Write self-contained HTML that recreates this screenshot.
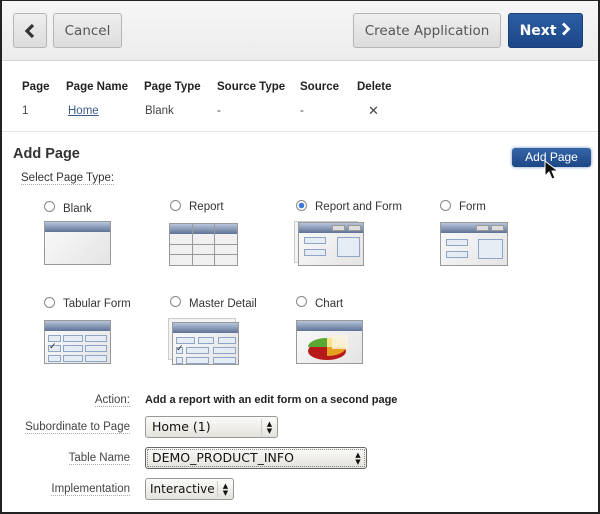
<!DOCTYPE html>
<html><head><meta charset="utf-8"><style>
*{margin:0;padding:0;box-sizing:border-box}
body{width:600px;height:514px;overflow:hidden;background:#fff;font-family:"Liberation Sans",sans-serif;position:relative;color:#333}
.a{position:absolute}
.frame{position:absolute;left:0;top:0;width:600px;height:514px;border-top:1px solid #222;border-left:2px solid #222;border-right:2px solid #222;border-bottom:2px solid #222;pointer-events:none}
.hdr{left:0;top:0;width:600px;height:61px;background:linear-gradient(#f6f6f6,#ececec);border-bottom:1px solid #d4d4d4}
.btn{position:absolute;border:1px solid #b5b5b5;border-radius:3px;background:linear-gradient(#efefef,#dcdcdc);color:#555;font-family:"DejaVu Sans",sans-serif;font-size:13.5px;text-align:center;line-height:34px;height:35px;top:13px}
.th{font-size:11.5px;font-weight:bold;color:#222;top:81px}
.td{font-size:11.5px;color:#444;top:105px}
.rad{width:11px;height:11px;border:1px solid #888;border-radius:50%;background:#fff}
.lbl{font-size:11.5px;color:#333}
.ic{position:absolute;border:1px solid #999;background:linear-gradient(135deg,#fafafa,#e4e4e4)}
.ic .bar{position:absolute;left:0;right:0;top:0;height:10px;background:linear-gradient(#b9c6da,#5e7296)}
.fld{position:absolute;border:1px solid #8ea5c5;background:#e6ecf4;height:7px}
.sel{position:absolute;height:22px;border:1px solid #999;border-radius:3px;background:linear-gradient(#fbfbf8,#e4e2dc);font-family:"DejaVu Sans",sans-serif;font-size:12.5px;color:#111;line-height:20px;padding-left:6px}
.sel .ar{position:absolute;right:0;top:2px;bottom:2px;width:16px;border-left:1px solid #ccc;font-size:7px;line-height:7px;text-align:center;padding-top:2px}
.fl{font-size:11.5px;color:#444;text-align:right;width:130px;left:0}
.fl span{border-bottom:1px dotted #aaa}
</style></head><body>
<div class="a hdr"></div>
<div class="btn" style="left:13px;width:34px">
<svg width="12" height="16" viewBox="0 0 12 16" style="margin-top:9px"><path d="M9 2 L3 8 L9 14" stroke="#333" stroke-width="3.2" fill="none"/></svg></div>
<div class="btn" style="left:53px;width:69px">Cancel</div>
<div class="btn" style="left:353px;width:148px">Create Application</div>
<div class="btn" style="left:508px;width:75px;background:linear-gradient(#2c5ea3,#1c4687);border-color:#1a3f78;color:#fff;font-weight:bold;font-size:14px">Next <svg width="10" height="14" viewBox="0 0 10 14" style="vertical-align:-1px"><path d="M2 1.5 L7.5 7 L2 12.5" stroke="#fff" stroke-width="2.8" fill="none"/></svg></div>

<div class="a th" style="left:22px">Page</div>
<div class="a th" style="left:66px">Page Name</div>
<div class="a th" style="left:144px">Page Type</div>
<div class="a th" style="left:217px">Source Type</div>
<div class="a th" style="left:300px">Source</div>
<div class="a th" style="left:357px">Delete</div>
<div class="a td" style="left:22px">1</div>
<div class="a td" style="left:68px;color:#3b5a8a;text-decoration:underline">Home</div>
<div class="a td" style="left:145px">Blank</div>
<div class="a td" style="left:217px">-</div>
<div class="a td" style="left:300px">-</div>
<div class="a td" style="left:368px;font-size:13px;top:103px">✕</div>
<div class="a" style="left:2px;top:131px;width:596px;height:1px;background:#e6e6e6"></div>

<div class="a" style="left:13px;top:146px;font-size:14.5px;font-weight:bold;color:#333">Add Page</div>
<div class="a" style="left:512px;top:148px;width:79px;height:19px;border-radius:3px;background:linear-gradient(#3566a8,#1d4685);color:#fff;font-size:12px;text-align:center;line-height:19px;box-shadow:0 0 3px #6f8fc0">Add Page</div>
<svg class="a" style="left:543px;top:160px" width="18" height="22" viewBox="0 0 18 22"><path d="M2 1 L2 16 L6 12 L9 19 L12 18 L9 11 L15 11 Z" fill="#111" stroke="#fff" stroke-width="1"/></svg>
<div class="a lbl" style="left:21px;top:172px"><span style="border-bottom:1px dotted #aaa">Select Page Type:</span></div>

<div class="a rad" style="left:44px;top:201px"></div><div class="a lbl" style="left:63px;top:203px">Blank</div>
<div class="a rad" style="left:170px;top:200px"></div><div class="a lbl" style="left:189px;top:201px">Report</div>
<div class="a rad" style="left:296px;top:200px;background:radial-gradient(circle,#3a78d8 0 2.5px,#fff 3px)"></div><div class="a lbl" style="left:315px;top:201px">Report and Form</div>
<div class="a rad" style="left:440px;top:200px"></div><div class="a lbl" style="left:459px;top:201px">Form</div>

<div class="ic" style="left:44px;top:221px;width:67px;height:44px"><div class="bar"></div></div>
<div class="ic" style="left:169px;top:223px;width:69px;height:43px;background:#f0f0f0"><div class="bar"></div>
<div style="position:absolute;left:22px;top:0;bottom:0;width:1px;background:#999"></div>
<div style="position:absolute;left:44px;top:0;bottom:0;width:1px;background:#999"></div>
<div style="position:absolute;left:0;right:0;top:20px;height:1px;background:#999"></div>
<div style="position:absolute;left:0;right:0;top:30px;height:1px;background:#999"></div></div>
<div class="ic" style="left:294px;top:221px;width:64px;height:42px;background:#f3f3f3;border-color:#ccc"></div>
<div class="ic" style="left:298px;top:222px;width:66px;height:44px"><div class="bar"></div>
<div style="position:absolute;left:33px;top:2px;width:13px;height:6px;background:#ddd;border:1px solid #999"></div>
<div style="position:absolute;left:49px;top:2px;width:13px;height:6px;background:#ddd;border:1px solid #999"></div>
<div class="fld" style="left:5px;top:14px;width:22px"></div><div class="fld" style="left:5px;top:26px;width:22px"></div>
<div class="fld" style="left:38px;top:14px;width:23px;height:20px"></div></div>
<div class="ic" style="left:440px;top:222px;width:68px;height:44px"><div class="bar"></div>
<div style="position:absolute;left:35px;top:2px;width:13px;height:6px;background:#ddd;border:1px solid #999"></div>
<div style="position:absolute;left:50px;top:2px;width:13px;height:6px;background:#ddd;border:1px solid #999"></div>
<div class="fld" style="left:5px;top:16px;width:22px"></div><div class="fld" style="left:5px;top:28px;width:22px"></div>
<div class="fld" style="left:37px;top:16px;width:25px;height:20px"></div></div>

<div class="a rad" style="left:44px;top:297px"></div><div class="a lbl" style="left:63px;top:298px">Tabular Form</div>
<div class="a rad" style="left:170px;top:296px"></div><div class="a lbl" style="left:189px;top:298px">Master Detail</div>
<div class="a rad" style="left:296px;top:296px"></div><div class="a lbl" style="left:315px;top:298px">Chart</div>

<div class="ic" style="left:44px;top:320px;width:67px;height:44px"><div class="bar"></div>
<div class="fld" style="left:3px;top:14px;width:13px"></div><div class="fld" style="left:18px;top:14px;width:20px"></div><div class="fld" style="left:40px;top:14px;width:22px"></div>
<div class="fld" style="left:3px;top:24px;width:13px"></div><div class="fld" style="left:18px;top:24px;width:20px"></div><div class="fld" style="left:40px;top:24px;width:22px"></div>
<div class="fld" style="left:3px;top:34px;width:13px"></div><div class="fld" style="left:18px;top:34px;width:20px"></div><div class="fld" style="left:40px;top:34px;width:22px"></div>
<div style="position:absolute;left:4px;top:20px;font-size:9px;color:#222">✓</div></div>

<div class="ic" style="left:168px;top:318px;width:68px;height:42px;background:#f3f3f3;border-color:#ccc"></div>
<div class="ic" style="left:172px;top:322px;width:67px;height:43px"><div class="bar"></div>
<div class="fld" style="left:3px;top:14px;width:19px"></div><div class="fld" style="left:25px;top:14px;width:16px"></div><div class="fld" style="left:45px;top:14px;width:18px"></div>
<div class="fld" style="left:3px;top:24px;width:7px"></div><div class="fld" style="left:13px;top:24px;width:23px"></div><div class="fld" style="left:40px;top:24px;width:23px"></div>
<div class="fld" style="left:3px;top:34px;width:7px"></div><div class="fld" style="left:13px;top:34px;width:23px"></div><div class="fld" style="left:40px;top:34px;width:23px"></div>
<div style="position:absolute;left:3px;top:20px;font-size:9px;color:#222">✓</div></div>

<div class="ic" style="left:296px;top:320px;width:67px;height:44px"><div class="bar"></div>
<svg style="position:absolute;left:10px;top:12px" width="46" height="28" viewBox="0 0 46 28">
<ellipse cx="20" cy="18" rx="19" ry="9" fill="#b8191b"/>
<path d="M20 14 L1 14 A19 9 0 0 1 20 5 Z" fill="#5aa832"/>
<path d="M20 14 L39 14 A19 9 0 0 1 20 23 Z" fill="#e8a020"/>
<path d="M20 14 L20 5 A19 9 0 0 1 39 14 Z" fill="#f7e48a"/>
<rect x="25" y="2" width="16" height="14" fill="#fbf3dc" opacity="0.8"/>
</svg></div>

<div class="a fl" style="top:394px"><span>Action:</span></div>
<div class="a" style="left:145px;top:394px;font-size:11px;font-weight:bold;color:#222">Add a report with an edit form on a second page</div>
<div class="a fl" style="top:421px"><span>Subordinate to Page</span></div>
<div class="sel" style="left:145px;top:416px;width:133px">Home (1)<div class="ar">▲<br>▼</div></div>
<div class="a fl" style="top:452px"><span>Table Name</span></div>
<div class="sel" style="left:145px;top:447px;width:222px;border-color:#666;outline:1px dotted #888;outline-offset:-3px">DEMO_PRODUCT_INFO<div class="ar" style="border:none">▲<br>▼</div></div>
<div class="a fl" style="top:483px"><span>Implementation</span></div>
<div class="sel" style="left:145px;top:478px;width:89px;padding-left:4px;font-size:12px">Interactive<div class="ar" style="background:linear-gradient(#fbfbf8,#e4e2dc)">▲<br>▼</div></div>

<div class="frame"></div>
</body></html>
